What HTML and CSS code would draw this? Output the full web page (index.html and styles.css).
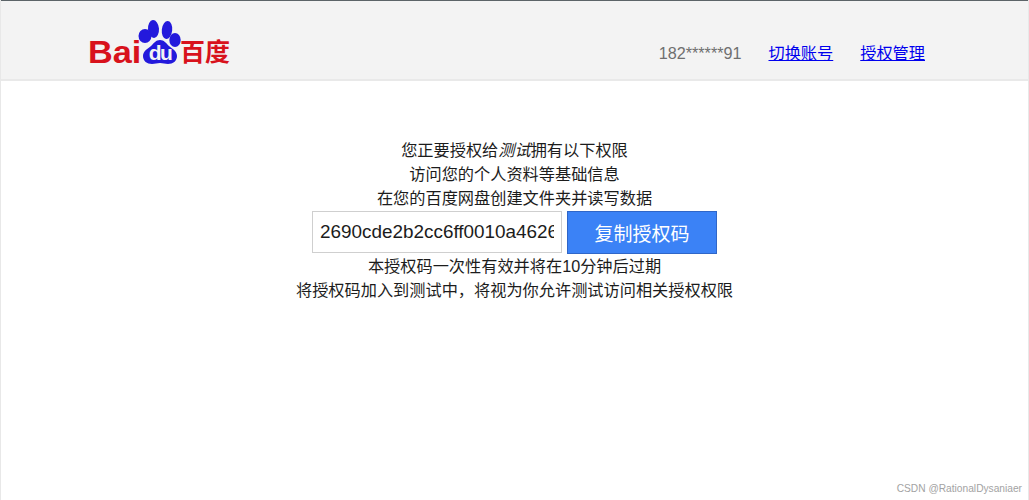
FILE: index.html
```html
<!DOCTYPE html>
<html lang="zh-CN">
<head>
<meta charset="utf-8">
<title>百度授权</title>
<link rel="stylesheet" href="styles.css">
</head>
<body>
<header class="topbar">
  <div class="logo">
    <span class="logo-latin">Bai</span>
    <svg class="paw" viewBox="0 0 44 46" width="44" height="46" aria-hidden="true">
      <ellipse cx="16.500" cy="10" rx="5.500" ry="9" fill="#2319dc" transform="rotate(-4 16.500 10)"/>
      <ellipse cx="30" cy="11" rx="5.200" ry="9" fill="#2319dc" transform="rotate(6 30 11)"/>
      <ellipse cx="8" cy="17" rx="6.500" ry="7" fill="#2319dc"/>
      <ellipse cx="38" cy="21" rx="5.700" ry="7" fill="#2319dc"/>
      <path d="M23 21c4 0 6 3 9 6 3 2.500 8 5 8 10 0 5-4 8-9 8-3 0-5-1-8-1s-5 1-8 1c-5 0-9-3-9-8 0-5 5-7.500 8-10 3-3 5-6 9-6z" fill="#2319dc"/>
      <text class="paw-text" x="23" y="41" text-anchor="middle">du</text>
    </svg>
    <span class="logo-cjk">百度</span>
  </div>
  <nav class="account">
    <span class="phone">182******91</span>
    <a href="#">切换账号</a>
    <a href="#">授权管理</a>
  </nav>
</header>
<main class="content">
  <p>您正要授权给<em>测试</em>拥有以下权限</p>
  <p>访问您的个人资料等基础信息</p>
  <p>在您的百度网盘创建文件夹并读写数据</p>
  <div class="code-row">
    <input class="code" type="text" readonly value="2690cde2b2cc6ff0010a46267d3f8a91">
    <button class="copy" type="button">复制授权码</button>
  </div>
  <p>本授权码一次性有效并将在10分钟后过期</p>
  <p>将授权码加入到测试中，将视为你允许测试访问相关授权权限</p>
</main>
<footer class="watermark">CSDN @RationalDysaniaer</footer>
</body>
</html>
```

FILE: styles.css
```css
* {
  box-sizing: border-box;
}

html,
body {
  height: 100%;
}

body {
  margin: 0;
  display: flex;
  flex-direction: column;
  overflow: hidden;
  background: #fff;
  border-left: 1px solid #e8e8e8;
  border-right: 1px solid #e8e8e8;
  color: #1c1c1c;
  font-family: "Liberation Sans", "Noto Sans CJK SC", sans-serif;
  font-size: 16.200px;
}

.topbar {
  height: 81px;
  flex: none;
  display: flex;
  align-items: flex-start;
  justify-content: space-between;
  padding: 0 103px 0 89px;
  background: #f3f3f3;
  border-top: 1px solid #5c6468;
  border-bottom: 2px solid #e9e9e9;
}

.logo {
  display: flex;
  align-items: flex-start;
  margin-top: 18px;
  height: 47px;
}

.logo-latin {
  margin-top: 16px;
  margin-left: -2px;
  width: 50px;
  color: #d8121c;
  font-size: 32px;
  font-weight: 700;
  line-height: 34px;
  transform: scaleX(1.07);
  transform-origin: left center;
}

.paw {
  display: block;
  flex: none;
  margin-left: -1px;
  margin-right: -2px;
}

.paw-text {
  fill: #f3f3f3;
  font-family: "Liberation Sans", sans-serif;
  font-size: 21px;
  font-weight: 700;
  letter-spacing: -1.500px;
}

.logo-cjk {
  margin-top: 18px;
  margin-left: 1px;
  color: #d8121c;
  font-size: 25px;
  font-weight: 700;
  line-height: 30px;
}

.account {
  display: flex;
  align-items: center;
  gap: 27px;
  margin-top: 41px;
  line-height: 22px;
}

.phone {
  color: #6f6f6f;
}

.account a {
  color: #0000ee;
}

.content {
  display: flex;
  flex-direction: column;
  align-items: center;
  padding-top: 57px;
  line-height: 24px;
}

.content p {
  margin: 0;
}

.code-row {
  display: flex;
  gap: 5px;
  margin: 1px 0 0;
}

.code {
  width: 250px;
  height: 42px;
  padding: 0 7px;
  background: #fff;
  border: 1px solid #cfcfcf;
  border-radius: 0;
  color: #1c1c1c;
  font-family: inherit;
  font-size: 18.900px;
  outline: none;
}

.copy {
  width: 150px;
  height: 43px;
  padding: 0;
  background: #3b82f6;
  border: 1px solid #2f66c8;
  color: #fff;
  font-family: inherit;
  font-size: 19px;
}

.watermark {
  position: absolute;
  right: 7px;
  bottom: 4px;
  color: #a3a3a3;
  font-size: 10.200px;
  line-height: 14px;
}
```
